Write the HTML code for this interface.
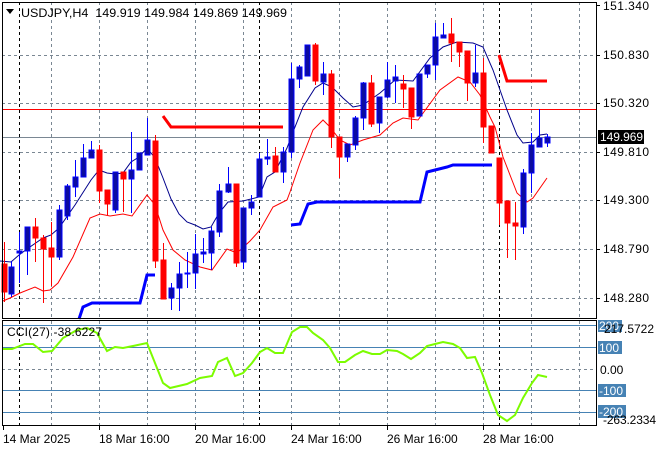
<!DOCTYPE html>
<html><head><meta charset="utf-8"><style>
html,body{margin:0;padding:0;background:#fff;}
svg{display:block;font-family:"Liberation Sans",sans-serif;font-size:12px;}
</style></head><body>
<svg width="660" height="450" viewBox="0 0 660 450" xmlns="http://www.w3.org/2000/svg">
<rect width="660" height="450" fill="#fff"/>
<g stroke="#7a8793" stroke-dasharray="3,3" stroke-width="1">
<path d="M2 55.5H596M2 103.5H596M2 152.5H596M2 200.5H596M2 249.5H596M2 298.5H596"/>
<path d="M51.5 2V318M99.5 2V318M147.5 2V318M195.5 2V318M243.5 2V318M291.5 2V318M339.5 2V318M387.5 2V318M435.5 2V318M483.5 2V318M531.5 2V318M579.5 2V318"/>
<path d="M51.5 321V425M99.5 321V425M147.5 321V425M195.5 321V425M243.5 321V425M291.5 321V425M339.5 321V425M387.5 321V425M435.5 321V425M483.5 321V425M531.5 321V425M579.5 321V425"/>
<path d="M2 369.5H596"/>
</g>
<g stroke="#000" stroke-dasharray="3,3" stroke-width="1">
<path d="M19.5 2V318M259.5 2V318M499.5 2V318M19.5 321V425M259.5 321V425M499.5 321V425"/>
</g>
<path d="M2 109.5H596" stroke="#ff0000" stroke-width="1"/>
<path d="M2 137.5H596" stroke="#7a8793" stroke-width="1"/>
<polyline points="79,319 83,307 92,303 140,303 147,275 155,275" fill="none" stroke="#0000ff" stroke-width="3"/>
<polyline points="291,225 300,224 308,204 317,202 420,202 427,172 447,167 453,165 492,165" fill="none" stroke="#0000ff" stroke-width="3"/>
<polyline points="163,116 171,127 283,127" fill="none" stroke="#ff0000" stroke-width="3"/>
<polyline points="499,55 507,81 547,81" fill="none" stroke="#ff0000" stroke-width="3"/>
<polyline points="0,261 11,262 19,255 27,249 43,238 51,235 59,228 75,205 91,180 99,170 107,173 115,174 123,173 131,162 139,157 147,148 155,158 163,178 171,199 179,214 187,222 195,225 203,229 211,227 219,213 228,202 243,201 259,197 267,177 275,172 287,148 293,132 303,107 315,88 323,83 332,87 343,98 353,107 363,105 380,93 395,80 413,81 430,58 443,47 457,42 473,43 483,47 493,70 507,110 517,135 523,143 533,142 540,135 547,134" fill="none" stroke="#00008b" stroke-width="1"/>
<polyline points="3,301 10,298 20,293 35,287 43,291 50,290 58,283 73,257 90,218 100,214 110,216 123,214 132,216 147,195 155,205 163,230 173,250 185,260 200,267 212,270 227,249 237,253 250,241 260,230 273,207 287,200 290,192 300,163 313,130 323,120 330,127 340,140 350,145 363,140 380,135 393,123 403,118 418,120 440,90 458,77 470,82 480,95 490,117 495,127 503,157 517,193 527,202 533,198 547,178" fill="none" stroke="#ff0000" stroke-width="1"/>
<g stroke-width="1">
<g stroke="#ff0000" fill="#ff0000">
<path d="M4.5 242V302"/><rect x="2" y="264" width="5" height="28"/>
<path d="M35.5 218V262"/><rect x="33" y="227" width="5" height="11"/>
<path d="M43.5 235V303"/><rect x="41" y="238" width="5" height="11"/>
<path d="M51.5 222V286"/><rect x="49" y="248" width="5" height="9"/>
<path d="M99.5 145V203"/><rect x="97" y="150" width="5" height="41"/>
<path d="M107.5 190V215"/><rect x="105" y="190" width="5" height="14"/>
<path d="M123.5 172V212"/><rect x="121" y="172" width="5" height="7"/>
<path d="M155.5 135V268"/><rect x="153" y="141" width="5" height="120"/>
<path d="M163.5 243V299"/><rect x="161" y="260" width="5" height="39"/>
<path d="M236.5 184V267"/><rect x="234" y="184" width="5" height="79"/>
<path d="M275.5 147V172"/><rect x="273" y="156" width="5" height="16"/>
<path d="M315.5 43V85"/><rect x="313" y="45" width="5" height="36"/>
<path d="M331.5 70V148"/><rect x="329" y="74" width="5" height="63"/>
<path d="M339.5 137V178"/><rect x="337" y="137" width="5" height="20"/>
<path d="M371.5 75V127"/><rect x="369" y="83" width="5" height="41"/>
<path d="M403.5 75V108"/><rect x="401" y="84" width="5" height="5"/>
<path d="M411.5 88V129"/><rect x="409" y="88" width="5" height="29"/>
<path d="M451.5 18V62"/><rect x="449" y="34" width="5" height="9"/>
<path d="M459.5 42V67"/><rect x="457" y="42" width="5" height="10"/>
<path d="M467.5 51V101"/><rect x="465" y="51" width="5" height="32"/>
<path d="M483.5 58V143"/><rect x="481" y="73" width="5" height="54"/>
<path d="M491.5 126V153"/><rect x="489" y="126" width="5" height="27"/>
<path d="M499.5 158V225"/><rect x="497" y="158" width="5" height="45"/>
<path d="M507.5 201V258"/><rect x="505" y="201" width="5" height="22"/>
<path d="M515.5 202V260"/><rect x="513" y="223" width="5" height="3"/>
</g>
<g stroke="#0000ff">
<path d="M11.5 261V297M19.5 232V283M27.5 227V275M59.5 205V260M67.5 184V220M75.5 160V197M83.5 144V177M91.5 141V158M115.5 172V213M131.5 132V213M139.5 153V170M147.5 118V155M171.5 283V310M179.5 262V311M187.5 252V288M195.5 234V289M203.5 238V263M211.5 227V270M219.5 184V237M228.5 167V193M243.5 208V269M251.5 195V215M259.5 153V197M267.5 139V165M283.5 147V183M291.5 63V158M299.5 65V88M307.5 45V76M323.5 62V95M347.5 144V162M355.5 116V150M363.5 82V130M379.5 97V133M387.5 62V98M395.5 65V103M419.5 74V116M427.5 65V78M435.5 23V80M443.5 23V38M475.5 45V87M523.5 169V234M531.5 133V193M539.5 109V147M547.5 134V147"/>
</g>
<g fill="#0c0ca0" stroke="#0000ff">
<rect x="9" y="267" width="5" height="27"/>
<rect x="17" y="251" width="5" height="2"/>
<rect x="25" y="227" width="5" height="24"/>
<rect x="57" y="210" width="5" height="47"/>
<rect x="65" y="186" width="5" height="30"/>
<rect x="73" y="177" width="5" height="10"/>
<rect x="81" y="158" width="5" height="19"/>
<rect x="89" y="150" width="5" height="8"/>
<rect x="113" y="172" width="5" height="38"/>
<rect x="129" y="170" width="5" height="9"/>
<rect x="137" y="153" width="5" height="17"/>
<rect x="145" y="140" width="5" height="15"/>
<rect x="169" y="288" width="5" height="10"/>
<rect x="177" y="274" width="5" height="14"/>
<rect x="185" y="273" width="5" height="1"/>
<rect x="193" y="254" width="5" height="19"/>
<rect x="201" y="252" width="5" height="2"/>
<rect x="209" y="231" width="5" height="22"/>
<rect x="217" y="191" width="5" height="41"/>
<rect x="226" y="184" width="5" height="8"/>
<rect x="241" y="208" width="5" height="54"/>
<rect x="249" y="202" width="5" height="6"/>
<rect x="257" y="159" width="5" height="38"/>
<rect x="265" y="157" width="5" height="2"/>
<rect x="281" y="152" width="5" height="20"/>
<rect x="289" y="79" width="5" height="73"/>
<rect x="297" y="67" width="5" height="12"/>
<rect x="305" y="45" width="5" height="31"/>
<rect x="321" y="74" width="5" height="8"/>
<rect x="345" y="144" width="5" height="13"/>
<rect x="353" y="118" width="5" height="27"/>
<rect x="361" y="83" width="5" height="35"/>
<rect x="377" y="97" width="5" height="26"/>
<rect x="385" y="80" width="5" height="17"/>
<rect x="393" y="77" width="5" height="4"/>
<rect x="417" y="74" width="5" height="42"/>
<rect x="425" y="65" width="5" height="9"/>
<rect x="433" y="37" width="5" height="28"/>
<rect x="441" y="35" width="5" height="3"/>
<rect x="473" y="73" width="5" height="10"/>
<rect x="521" y="173" width="5" height="54"/>
<rect x="529" y="145" width="5" height="28"/>
<rect x="537" y="138" width="5" height="9"/>
<rect x="545" y="137" width="5" height="6"/>
</g>
</g>
<g stroke="#4682b4" stroke-width="1">
<path d="M2 325.5H596M2 347.5H596M2 390.5H596M2 412.5H596"/>
</g>
<polyline points="3,349 12,349 25,344 33,344 43,352 52,351 63,338 77,330 87,328 97,333 107,351 115,347 123,348 133,346 147,343 163,383 170,388 187,384 200,378 212,376 218,362 227,358 235,376 243,373 252,363 260,352 267,348 275,353 283,353 292,332 300,327 307,327 313,333 323,340 330,348 338,362 345,362 355,355 363,351 372,354 380,354 387,350 397,351 403,354 411,359 420,353 427,346 435,344 443,342 453,344 460,348 467,358 475,357 482,373 490,395 498,415 507,421 515,415 523,398 532,383 538,375 547,377" fill="none" stroke="#7cfc00" stroke-width="2"/>
<text x="7" y="336" fill="#000" textLength="95" lengthAdjust="spacing">CCI(27) -38.6227</text>
<rect x="2.5" y="2.5" width="594" height="316" fill="none" stroke="#000"/>
<rect x="2.5" y="320.5" width="594" height="105" fill="none" stroke="#000"/>
<path d="M6 9H14L10 14Z" fill="#000"/>
<text x="21" y="17" fill="#000" xml:space="preserve" textLength="266" lengthAdjust="spacingAndGlyphs">USDJPY,H4  149.919 149.984 149.869 149.969</text>
<g stroke="#000"><path d="M597 5.5H600M597 55.5H600M597 103.5H600M597 152.5H600M597 200.5H600M597 249.5H600M597 298.5H600"/></g>
<g fill="#000">
<text x="603" y="10" textLength="46">151.340</text>
<text x="603" y="59" textLength="46">150.830</text>
<text x="603" y="107" textLength="46">150.320</text>
<text x="603" y="156" textLength="46">149.810</text>
<text x="603" y="204" textLength="46">149.300</text>
<text x="603" y="253" textLength="46">148.790</text>
<text x="603" y="302" textLength="46">148.280</text>
</g>
<rect x="598" y="130" width="46" height="14" fill="#000"/>
<text x="600" y="141" fill="#fff" textLength="43">149.969</text>
<rect x="598" y="320" width="24" height="12" fill="#4682b4"/>
<text x="599" y="330" fill="#fff">200</text>
<text x="604" y="333" fill="#000" textLength="50">217.5722</text>
<rect x="598" y="341" width="24" height="13" fill="#4682b4"/>
<text x="599" y="352" fill="#fff">100</text>
<text x="600" y="374" fill="#000">0.00</text>
<rect x="598" y="384" width="28" height="13" fill="#4682b4"/>
<text x="599" y="395" fill="#fff">-100</text>
<rect x="598" y="405" width="28" height="13" fill="#4682b4"/>
<text x="599" y="416" fill="#fff">-200</text>
<text x="603" y="424" fill="#000" textLength="53">-263.2334</text>
<g stroke="#000"><path d="M3.5 426V430M99.5 426V430M195.5 426V430M291.5 426V430M387.5 426V430M483.5 426V430"/></g>
<g fill="#000">
<text x="3" y="443">14 Mar 2025</text>
<text x="99" y="443">18 Mar 16:00</text>
<text x="195" y="443">20 Mar 16:00</text>
<text x="291" y="443">24 Mar 16:00</text>
<text x="387" y="443">26 Mar 16:00</text>
<text x="483" y="443">28 Mar 16:00</text>
</g>
</svg>
</body></html>
